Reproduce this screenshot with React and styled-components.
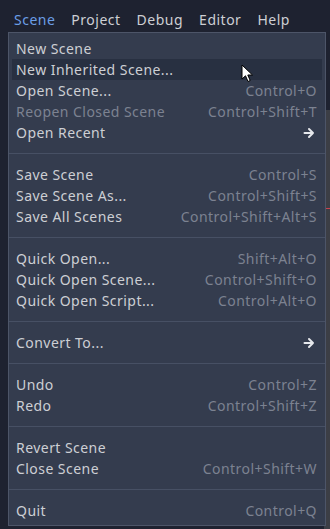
import React from "react";
import styled, { createGlobalStyle } from "styled-components";

const Global = createGlobalStyle`
  html, body { margin: 0; padding: 0; background: #1e2230; }
  body { width: 330px; height: 529px; overflow: hidden; font-family: "Noto Sans", "DejaVu Sans", sans-serif; }
  * { box-sizing: border-box; }
`;

const Screen = styled.div`
  position: relative;
  width: 330px;
  height: 529px;
  background: #1e2230;
  overflow: hidden;
  display: flex;
  flex-direction: column;
`;

const MenuBar = styled.div`
  display: flex;
  height: 32px;
  flex-shrink: 0;
  align-items: center;
  padding: 6px 0 0 6px;
`;

const BarItem = styled.div`
  padding: 0 8px;
  font-size: 14px;
  letter-spacing: 0.5px;
  color: ${(p) => (p.$active ? "#6b9ee6" : "#cdcfd4")};
`;

const Editor = styled.div`
  flex: 1;
  display: flex;
`;

const Dock = styled.div`
  width: 324px;
  background: #1e2230;
`;

const Main = styled.div`
  flex: 1;
  display: flex;
  flex-direction: column;
`;

const Toolbar = styled.div`
  height: 78px;
  background: #1e2230;
`;

const Viewport = styled.div`
  flex: 1;
  background: #3c3e45;
  display: flex;
  flex-direction: column;
  padding-top: 98px;
`;

const AxisLine = styled.div`
  height: 1px;
  background: #c8424f;
`;

const Popup = styled.div`
  position: absolute;
  left: 8px;
  top: 32px;
  width: 318px;
  background: #343c4e;
  border: 1px solid #4d5568;
  padding: 5px 3px 4px;
  display: flex;
  flex-direction: column;
`;

const Row = styled.div`
  height: 21px;
  display: flex;
  align-items: center;
  justify-content: space-between;
  padding: 0 5px 0 4px;
  font-size: 14px;
  letter-spacing: 0.45px;
  white-space: nowrap;
  background: ${(p) => (p.$hover ? "#283041" : "transparent")};
  color: ${(p) => (p.$disabled ? "#7c8291" : "#cdcfd4")};
`;

const Shortcut = styled.span`
  color: #7c8291;
`;

const ArrowBox = styled.span`
  display: flex;
  margin-right: 2px;
`;

const Sep = styled.div`
  height: 21px;
  display: flex;
  align-items: center;
  margin: 0 -3px;
  &::after {
    content: "";
    flex: 1;
    height: 1px;
    background: #475064;
  }
`;

const Cursor = styled.svg`
  position: absolute;
  left: 241px;
  top: 64px;
`;

const Arrow = () => (
  <ArrowBox>
    <svg width="12" height="12" viewBox="0 0 12 12">
      <path d="M1.5 6 H10 M6 2 L10 6 L6 10" stroke="#e6e8ec" strokeWidth="2" fill="none" strokeLinecap="round" strokeLinejoin="round" />
    </svg>
  </ArrowBox>
);

const items = [
  ["New Scene"],
  ["New Inherited Scene...", "", { hover: true }],
  ["Open Scene...", "Control+O"],
  ["Reopen Closed Scene", "Control+Shift+T", { disabled: true }],
  ["Open Recent", "", { arrow: true }],
  "sep",
  ["Save Scene", "Control+S"],
  ["Save Scene As...", "Control+Shift+S"],
  ["Save All Scenes", "Control+Shift+Alt+S"],
  "sep",
  ["Quick Open...", "Shift+Alt+O"],
  ["Quick Open Scene...", "Control+Shift+O"],
  ["Quick Open Script...", "Control+Alt+O"],
  "sep",
  ["Convert To...", "", { arrow: true }],
  "sep",
  ["Undo", "Control+Z"],
  ["Redo", "Control+Shift+Z"],
  "sep",
  ["Revert Scene"],
  ["Close Scene", "Control+Shift+W"],
  "sep",
  ["Quit", "Control+Q"],
];

export default function App() {
  return (
    <Screen>
      <Global />
      <MenuBar>
        <BarItem $active>Scene</BarItem>
        <BarItem>Project</BarItem>
        <BarItem>Debug</BarItem>
        <BarItem>Editor</BarItem>
        <BarItem>Help</BarItem>
      </MenuBar>
      <Editor>
        <Dock />
        <Main>
          <Toolbar />
          <Viewport>
            <AxisLine />
          </Viewport>
        </Main>
      </Editor>
      <Popup>
        {items.map((it, i) => {
          if (it === "sep") return <Sep key={i} />;
          const [label, sc, opt = {}] = it;
          return (
            <Row key={i} $hover={opt.hover} $disabled={opt.disabled}>
              <span>{label}</span>
              {opt.arrow ? <Arrow /> : sc ? <Shortcut>{sc}</Shortcut> : null}
            </Row>
          );
        })}
      </Popup>
      <Cursor width="14" height="20" viewBox="0 0 14 20">
        <path d="M1 1 L1 15 L4.5 11.8 L7 17.5 L9.2 16.5 L6.8 11 L11.5 11 Z" fill="#fff" stroke="#000" strokeWidth="1" strokeLinejoin="round" />
      </Cursor>
    </Screen>
  );
}
